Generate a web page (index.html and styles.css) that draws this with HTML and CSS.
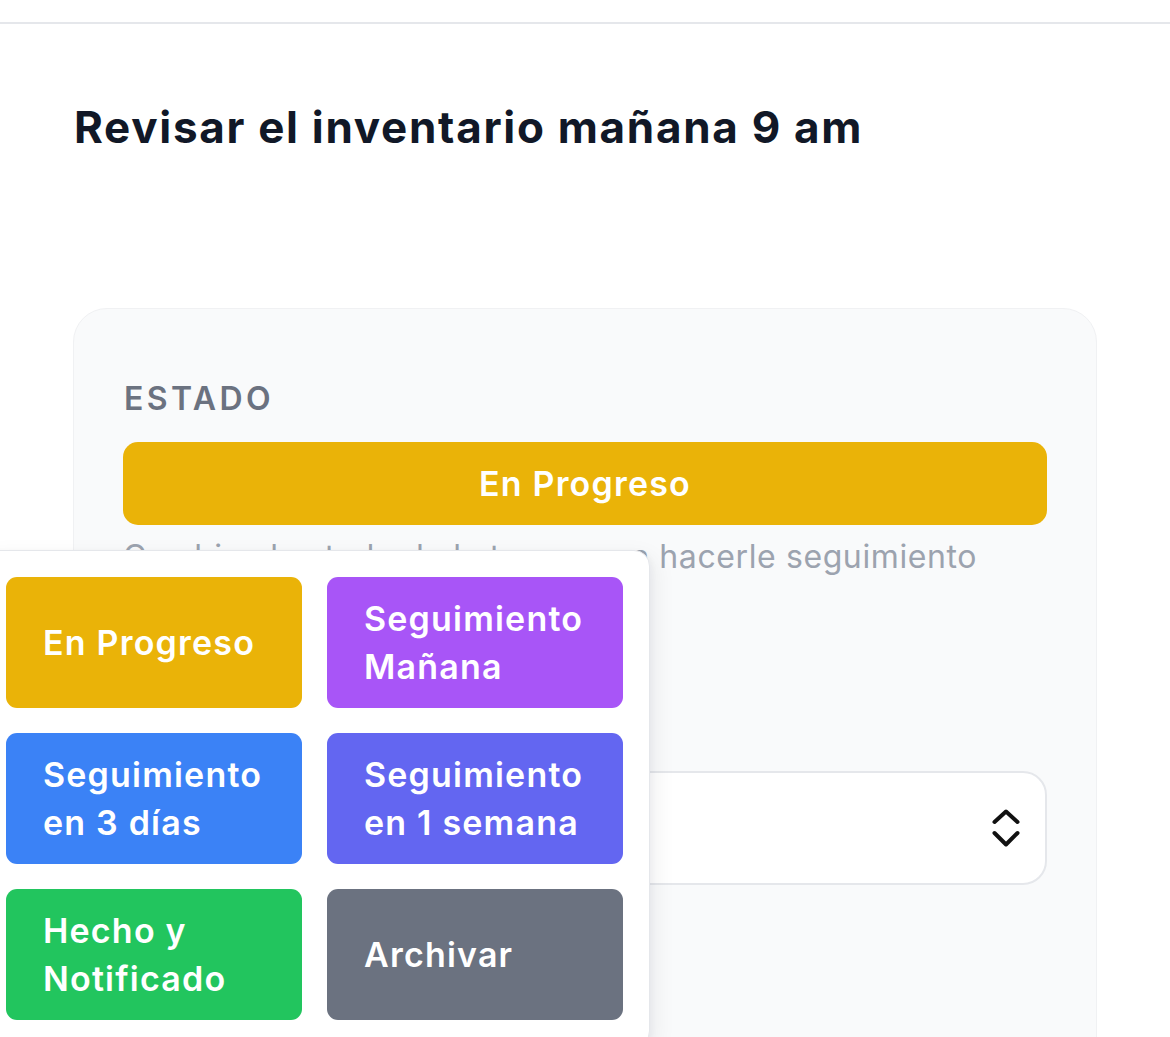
FILE: index.html
```html
<!DOCTYPE html>
<html lang="es">
<head>
<meta charset="utf-8">
<title>Tarea</title>
<link rel="stylesheet" href="styles.css">
</head>
<body>
<div class="topbar"></div>
<main class="page">
  <h1 class="title">Revisar el inventario mañana 9 am</h1>
  <section class="card">
    <div class="label">ESTADO</div>
    <button class="status-btn">En Progreso</button>
    <p class="helper">Cambia el estado de la tarea para hacerle seguimiento</p>
    <div class="label label-second">HORA</div>
    <div class="select">
      <span class="select-value"></span>
      <svg class="chev" width="28" height="38" viewBox="0 0 28 38" fill="none" stroke="#111" stroke-width="4" stroke-linecap="round" stroke-linejoin="round">
        <path d="M2.5 13 L14 2.5 L25.5 13"/>
        <path d="M2.5 24 L14 35.5 L25.5 24"/>
      </svg>
    </div>
  </section>
</main>
<div class="popover">
  <button class="opt yellow">En Progreso</button>
  <button class="opt purple">Seguimiento<br>Mañana</button>
  <button class="opt blue">Seguimiento<br>en 3 días</button>
  <button class="opt indigo">Seguimiento<br>en 1 semana</button>
  <button class="opt green">Hecho y<br>Notificado</button>
  <button class="opt gray">Archivar</button>
</div>
</body>
</html>
```
FILE: styles.css
```css
* { box-sizing: border-box; }
html, body { margin: 0; padding: 0; }
body {
  background: #ffffff;
  font-family: Inter, "Noto Sans", "Liberation Sans", sans-serif;
  height: 1037px;
  overflow: hidden;
  position: relative;
}
.topbar {
  height: 24px;
  border-bottom: 2px solid #e5e7eb;
}
.page {
  padding: 0 73px;
}
.title {
  margin: 76px 0 0 1px;
  font-size: 44px;
  line-height: 54px;
  font-weight: 700;
  color: #111827;
  letter-spacing: 1.7px;
}
.card {
  margin-top: 154px;
  background: #f9fafb;
  border: 1px solid #f0f1f3;
  border-radius: 34px;
  padding: 71px 49px 200px;
  width: 1024px;
}
.label {
  font-size: 32px;
  line-height: 38px;
  font-weight: 600;
  color: #6b7280;
  letter-spacing: 3.4px;
  margin-left: 1px;
}
.status-btn {
  display: block;
  width: 100%;
  margin-top: 24px;
  height: 83px;
  border: none;
  border-radius: 15px;
  background: #eab308;
  color: #ffffff;
  font-family: inherit;
  font-size: 34px;
  font-weight: 600;
  letter-spacing: 1.2px;
}
.helper {
  margin: 12px 0 0 0;
  font-size: 32px;
  line-height: 40px;
  color: #9ca3af;
  letter-spacing: 0.6px;
  white-space: nowrap;
}
.label-second {
  margin-top: 126px;
}
.select {
  margin-top: 30px;
  height: 114px;
  background: #ffffff;
  border: 2px solid #e5e7eb;
  border-radius: 24px;
  display: flex;
  align-items: center;
  justify-content: space-between;
  padding: 0 25px 0 30px;
}
.chev { display: block; }
.popover {
  position: absolute;
  left: -21px;
  top: 550px;
  width: 671px;
  padding: 26px;
  background: #ffffff;
  border: 1px solid #e5e7eb;
  border-radius: 16px;
  box-shadow: 6px 6px 22px rgba(17, 24, 39, 0.06), 2px 2px 6px rgba(17, 24, 39, 0.04);
  display: grid;
  grid-template-columns: 296px 296px;
  grid-auto-rows: 131px;
  column-gap: 25px;
  row-gap: 25px;
}
.opt {
  border: none;
  border-radius: 11px;
  color: #ffffff;
  font-family: inherit;
  font-size: 34px;
  line-height: 48px;
  font-weight: 600;
  text-align: left;
  padding: 0 0 0 37px;
  letter-spacing: 1.2px;
}
.yellow { background: #eab308; }
.purple { background: #a855f7; }
.blue { background: #3b82f6; }
.indigo { background: #6366f1; }
.green { background: #22c55e; }
.gray { background: #6b7280; }
```
